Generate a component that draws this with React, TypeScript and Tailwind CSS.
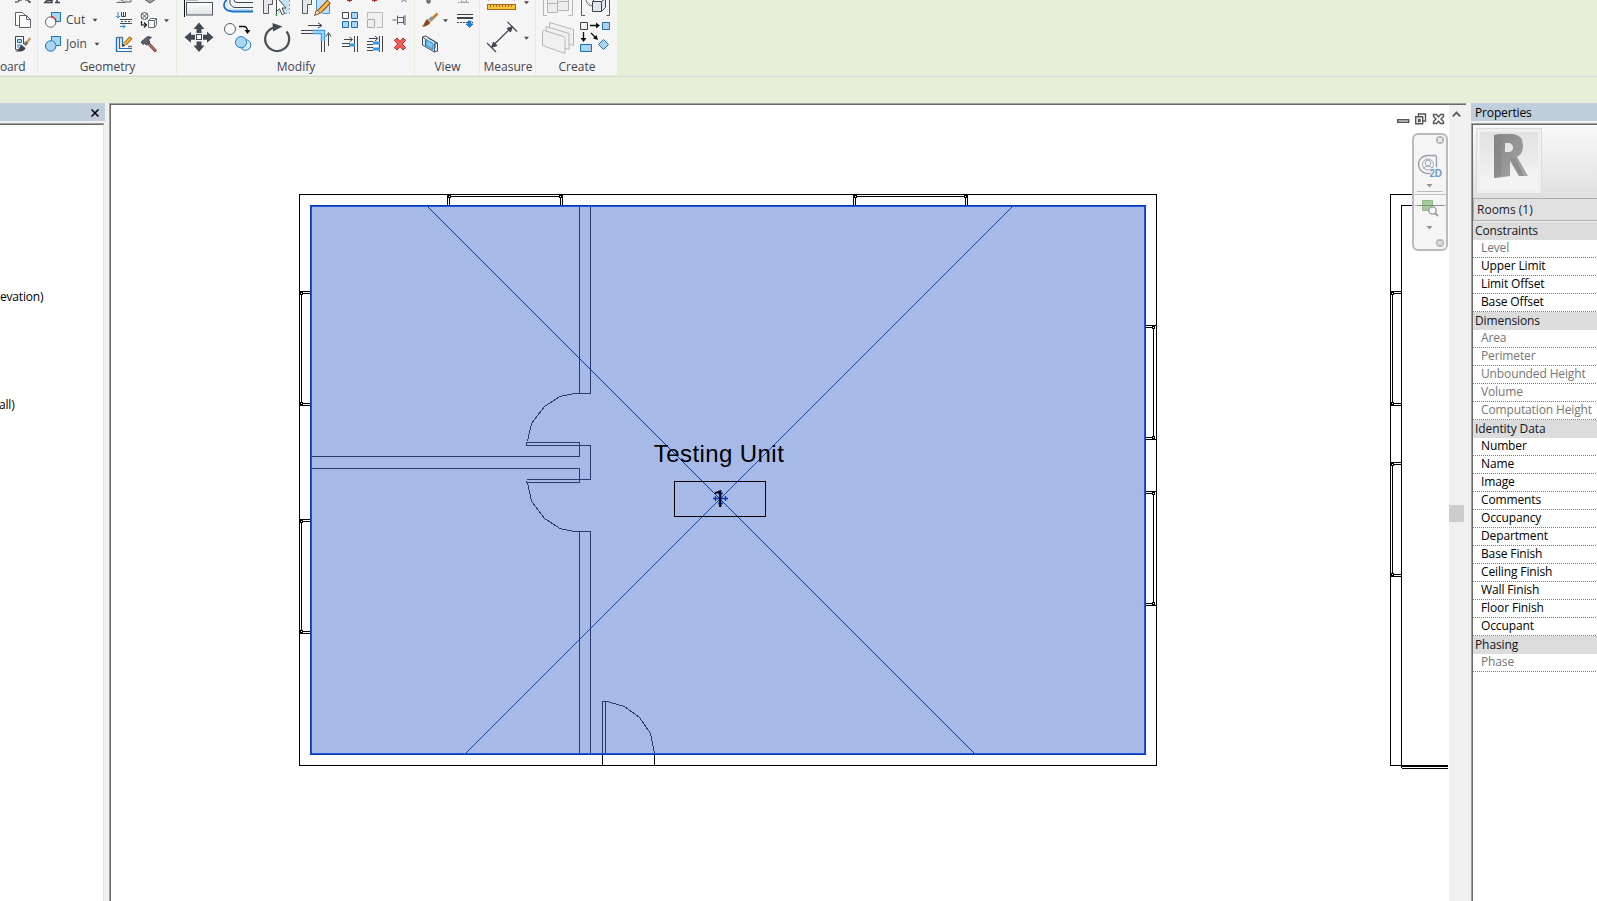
import React from "react";

const INK = "#3f4650";
const BLUE = "#1a6fb5";
const SKY = "#a8d6ee";

function Caret({ x, y }: { x: number; y: number }) {
  return <path d={`M${x - 2.5} ${y - 1.2}h5l-2.5 3z`} fill="#4a4a4a" />;
}

/* A strip of ribbon drawings; coordinates share the ribbon's own origin. */
function Strip({ x, w, children }: { x: number; w: number; children: React.ReactNode }) {
  return (
    <svg width={w} height={57} viewBox={`${x} 0 ${w} 57`} className="block shrink-0" fill="none">
      {children}
    </svg>
  );
}

function Group({ label, className, children }: { label: string; className: string; children: React.ReactNode }) {
  return (
    <div className={"flex h-[75px] shrink-0 flex-col overflow-hidden bg-[#f5f5f5] " + className}>
      <div className="flex h-[57px]">{children}</div>
      <div className="h-[18px] pl-px text-center text-[12px] leading-[19px] text-[#43434f]">{label}</div>
    </div>
  );
}

function ClipboardIcons() {
  return (
    <Strip x={0} w={37}>
      <g stroke={INK} strokeWidth="1.3">
        <path d="M18 2.500c0-2 2-3 4-2.500M29 2.500c0-2-2-3-4-2.500M16 3v-2M30 3v-2" />
      </g>
      <path d="M18.500 25.500h-3v-13h7l3 3" fill="#fff" stroke="#596068" />
      <path d="M19.500 15.500h7l4 4v8h-11z" fill="#fafafa" stroke="#596068" />
      <path d="M26.500 15.500v4h4" stroke="#596068" />
      <path d="M23.500 44v-7.500h-8v13h2" stroke={INK} fill="#fff" />
      <path d="M17.500 39.500h4v3h-4z" fill={SKY} stroke={BLUE} />
      <path d="M17 45h4M17 47h2" stroke={BLUE} />
      <path d="M30.500 38l-5 6" stroke="#c99c63" strokeWidth="2.400" />
      <path d="M27 42l-2.500 3" stroke="#777" strokeWidth="3.500" />
      <path d="M21 44.500l4.500 3.500c-1 3-4 4-10.500 3.500c3-1 4-3 6-7z" fill={INK} />
    </Strip>
  );
}

function CutJoinIcons() {
  return (
    <Strip x={38} w={27}>
      <path d="M45 2.500h7v-2h-5zM55 2.500h5M57 0v3" stroke={INK} strokeWidth="1.500" />
      <path d="M51.500 12.500h9v9h-9z" fill={SKY} stroke={BLUE} />
      <circle cx="50.700" cy="22" r="5.200" fill="#fff" stroke="#666" />
      <path d="M51 16.800a5.200 5.200 0 0 1 4.900 5" stroke="#e02020" strokeWidth="1.400" />
      <path d="M51.500 36.500h9v9h-9z" fill={SKY} stroke={BLUE} />
      <circle cx="50.700" cy="46" r="5.200" fill={SKY} stroke={BLUE} />
      <path d="M52 41v4.500h3.500" stroke={SKY} strokeWidth="1.500" />
    </Strip>
  );
}

function GeometryTools() {
  return (
    <Strip x={110} w={66}>
      <path d="M116.500 2.500h9l-5-3M125 -1h6v3h-6" stroke="#6b7076" fill="#dcdfe2" />
      <path d="M144 -1l6 4l6-4" stroke="#555" fill="#9aa0a8" />
      <path d="M118 12v6M116 16l2 2 2-2" stroke="#1f86dc" />
      <path d="M121.500 12v4.500h4V12M123.500 12v4" stroke={INK} />
      <path d="M120 19.500h12M120 23.500h12" stroke={INK} />
      <path d="M121 21.500h11" stroke={INK} strokeDasharray="2 1.500" />
      <path d="M120 26.500h5M123 24.500l2 2-2 2" stroke="#1f86dc" />
      <circle cx="144.500" cy="16" r="3.500" stroke="#555b63" />
      <path d="M142 13.500l5 5M147 13.500l-5 5" stroke="#555b63" />
      <path d="M141.500 21v4h4M144 22.500l2.500 2.500-2.500 2.500" stroke="#111" strokeWidth="1.200" />
      <path d="M148.500 20.500l2-2h6v6l-2 3h-6z" fill="#f7f7f7" stroke="#666d75" />
      <path d="M148.500 20.500h6v7M154.500 20.500l2-2" stroke="#666d75" />
      <Caret x={166.500} y={20.500} />
      <path d="M116.500 37v15M119.500 37v12M122.500 37v9" stroke="#1f6fb8" strokeWidth="1.300" />
      <path d="M116 51.500h16M119 48.500h13" stroke="#1f6fb8" strokeWidth="1.200" />
      <path d="M117 37.500h6M128 46.500h4M129 51.500h3" stroke="#777" strokeWidth="1.500" />
      <path d="M131 37.500l-6 6.500" stroke="#8a4a12" strokeWidth="3.800" />
      <path d="M130.500 38l-6 6.500" stroke="#f5b431" strokeWidth="2.400" />
      <path d="M122 47l1-3.500 2.500 2.200z" fill="#4a3b2d" />
      <path d="M148 43l8 8.500" stroke="#7e3e36" strokeWidth="3" />
      <path d="M148 43l8 8.500" stroke="#d79a8b" strokeWidth="1" />
      <path d="M141 42l6.500-5.500 4 .8-3 2.700 1.500 2-3.500 3-2-1.500-1.500 1z" fill="#59616c" stroke="#343b45" strokeWidth=".8" />
    </Strip>
  );
}

function ModifyIcons() {
  return (
    <Strip x={177} w={237}>
      <defs>
        <linearGradient id="plate" x1="0" y1="0" x2="0" y2="1">
          <stop offset="0" stopColor="#fff" />
          <stop offset="1" stopColor="#dfe1e5" />
        </linearGradient>
      </defs>
      <path d="M184.500 0v17" stroke="#111" />
      <path d="M186 0h12" stroke="#bbb" strokeWidth="2" />
      <rect x="186.500" y="2.500" width="26" height="12.500" fill="url(#plate)" stroke="#50565e" />
      <path d="M253 2.500h-16q-3 0-3-2.500M253 7.500h-18q-6-1-5-7.500" stroke={INK} />
      <path d="M253 11.500h-20q-9-.5-9-6.500q0-3 3-5.500" stroke="#1673c7" strokeWidth="1.800" />
      <path d="M227 1q-1 8 6 8.500h20" stroke="#bcdcf2" />
      <path d="M263.500 0v13.500h5v-9h4V0" fill="#e4e6e9" stroke="#555b63" />
      <path d="M279 0h10v13h-11z" fill="#c4e2f4" />
      <path d="M276.500 0v14" stroke="#3f4650" />
      <path d="M289.500 0v13.500h-9" stroke="#6da9d8" strokeDasharray="2 2" />
      <path d="M276.500 -3v14.500l3-2.800 2.500 6 2.500-1.200-2.500-5.500h4z" fill="#fff" stroke="#4a4a4a" />
      <circle cx="276.500" cy="15" r="1" fill="#2da12d" />
      <path d="M302.500 0v13.500h5v-9h4V0" fill="#e4e6e9" stroke="#555b63" />
      <path d="M316 0h13v13h-13z" fill="#bfe0f4" />
      <path d="M316.500 0v12M329.500 5v8.500h-7" stroke="#3d97dc" />
      <path d="M329 1.500l-9.500 10" stroke="#8a4812" strokeWidth="5" />
      <path d="M328.500 2l-9.500 10" stroke="#f8bd48" strokeWidth="3" />
      <path d="M314.500 15.500l2-6 4 3.700z" fill="#f3d8ae" stroke="#564331" strokeWidth=".8" />
      <path d="M347 .5h5M349.500 0v2M372 .5h5M374.500 0v2" stroke="#b72a2a" strokeWidth="1.200" />
      <path d="M401.500 2l2.500-2.500 2.500 2.500" stroke="#aaa" strokeWidth="1.500" />

      <g fill="#424951">
        <path d="M199 22.500l5.500 6.500h-3v4h-5v-4h-3z" />
        <path d="M199 52l5.500-6.500h-3v-4h-5v4h-3z" />
        <path d="M184.500 37.200l6.500-5.500v3h4v5h-4v3z" />
        <path d="M213.500 37.200l-6.500-5.500v3h-4v5h4v3z" />
      </g>
      <rect x="196.500" y="34.500" width="5" height="5" fill="#fff" stroke="#424951" />
      <circle cx="230" cy="29" r="5.500" fill="#fafafa" stroke="#596068" />
      <path d="M239 26.500h4.500q4 0 4 5" stroke="#111" strokeWidth="1.300" />
      <path d="M244.500 30l3 4 3-4z" fill="#111" />
      <circle cx="245.500" cy="45" r="5.300" fill="#d5ebf7" stroke="#2680c7" />
      <circle cx="241" cy="42.200" r="5.600" fill={SKY} stroke="#2680c7" />
      <path d="M286.500 31.500a12 12 0 1 1-14.500-3.300l3-1" stroke="#4b5158" strokeWidth="2.200" />
      <path d="M272.500 23l10 3.500-9.500 5z" fill="#424951" />
      <path d="M308 25.500h13M318 23l4 2.500-4 2.500M328.500 46V34M326 36.500l2.500-4 2.500 4" stroke={INK} />
      <path d="M301 30.500h12M301 33.500h12M321.500 41v11M324.500 41v11" stroke={INK} />
      <path d="M313 32h10v9" stroke="#3c9fec" strokeWidth="4.500" />
      <path d="M313 32h10v9" stroke="#9dd1fb" strokeWidth="2" />

      <path d="M342.500 12.500h6v6h-6z" fill="#fff" stroke={INK} />
      <path d="M351.500 12.500h6v6h-6zM342.500 21.500h6v6h-6zM351.500 21.500h6v6h-6z" fill={SKY} stroke={BLUE} />
      <path d="M367.500 18v-5.500h15v15h-6" fill="#f0f0f0" stroke="#b9b9b9" />
      <path d="M367.500 19.500h7v8h-7z" fill="#eee" stroke="#aaa" />
      <path d="M392.500 20h4M397.500 15.500v9M398 17.500h5M398 22.500h5M403.500 17l1.500-1.500v9.500l-1.500-1.500z" stroke="#5c6269" />
      <path d="M344 39.500h8M349.500 37l3 2.500-3 2.500M342 43.500h8M342 46.500h8M354.500 36v16M357.500 36v16" stroke={INK} />
      <path d="M349 45h6" stroke="#3399f0" strokeWidth="3" />
      <path d="M369 38.500h8M375 36l3 2.500-3 2.500M367 41.500h6M367 44.500h6M367 47.500h6M367 50.500h6M379.500 36v16M382.500 36v16" stroke={INK} />
      <path d="M373 43h7M373 49h7" stroke="#3399f0" strokeWidth="3" />
      <path d="M394.500 40.500l2.500-2.500 3 3.500 3-3.500 2.500 2.500-3.300 3.500 3.300 3.500-2.500 2.500-3-3.500-3 3.500-2.500-2.500 3.300-3.500z" fill="#f4605c" stroke="#c51d1d" />
    </Strip>
  );
}

function ViewIcons() {
  return (
    <Strip x={415} w={64}>
      <path d="M427 0v2.500q1.500 1.500 3 0V0" fill="#888e98" stroke={INK} />
      <path d="M458 2.500h11M461.500 0v2h5V0" stroke="#aaa" />
      <path d="M437.500 13.500l-7 7" stroke="#c77a38" strokeWidth="2.600" />
      <path d="M432.500 17.500l-3 3" stroke="#8d939b" strokeWidth="3.400" />
      <path d="M427 19l3.500 3.500c-2 3-5 4-8.500 4.300c2-2 2.500-5 5-7.800z" fill="#8a4b1f" />
      <Caret x={445.500} y={20.500} />
      <path d="M457 14.500h16" stroke={INK} />
      <path d="M457 18h16" stroke={INK} strokeWidth="2" />
      <path d="M457 22.500h16" stroke={INK} strokeDasharray="2 1" />
      <path d="M468 21h3v3h2l-3.500 3.500-3.500-3.500h2z" fill="#1e82dc" stroke="#0f5ca8" strokeWidth=".6" />
      <path d="M422.500 37l3-1 12 7v8l-3 1-12-7z" fill="#edf1f5" stroke={INK} />
      <path d="M426 39.500l7 4v6l-7-4z" fill="#7cc4f4" stroke="#1b86da" />
      <path d="M428 38l7 4v6M422.500 37l3 2v7M434.500 52v-8l3-1" stroke="#47617c" />
    </Strip>
  );
}

function MeasureIcons() {
  return (
    <Strip x={480} w={55}>
      <path d="M489 0v1M514 0v1" stroke="#999" />
      <rect x="487.500" y="4.500" width="28" height="5" fill="#f7c33c" stroke="#a8681c" />
      <path d="M490.500 5v2M493.500 5v2M496.500 5v2M499.500 5v2M502.500 5v2M505.500 5v2M508.500 5v2M511.500 5v2" stroke="#a8681c" />
      <Caret x={526.500} y={2.500} />
      <path d="M492 46.500l20-19.500M507.500 22l9.500 9.500M487 43l9 9" stroke={INK} strokeWidth="1.200" />
      <path d="M491.500 47.500l2-5.500 3.500 3.500zM512.500 26.500l-5.500 2 3.500 3.500z" fill={INK} stroke={INK} />
      <Caret x={526.500} y={38} />
    </Strip>
  );
}

function CreateIcons() {
  return (
    <Strip x={536} w={81}>
      <path d="M547 15.500h-3.500V0M568.500 15.500h4V0" stroke="#b5b5b5" />
      <path d="M547.500 0v12.500h9l3-2h9V0M557.500 0v12M547.500 3.500h9l3-2h9" fill="#ededed" stroke="#b5b5b5" />
      <path d="M585 15.500h-3.500V0M606.500 15.500h3V0" stroke="#555b63" />
      <path d="M586 0q1 6 7 6" fill="#d8dbdf" stroke="#70767e" />
      <path d="M592.500 1.500h9v10h-9zM592.500 1.500l3-3M601.500 1.500l4-3v9l-4 4" fill="#e2e6ea" stroke={INK} />
      <g fill="#f0f0f0" stroke="#b7b7b7">
        <path d="M549.500 22.500l24 7v16l-24-7z" />
        <path d="M546 26.500l23 7v16l-23-7z" />
        <path d="M542.500 31.500q0-1.500 2-1l19 6q1.500.5 1.500 2v15l-22.500-8z" />
      </g>
      <path d="M580.500 22.500h7v7h-7z" fill="#f1f1f1" stroke={INK} />
      <path d="M602.500 22.500h7v7h-7z" fill={SKY} stroke={BLUE} />
      <path d="M580.500 44.500h11v7h-11z" fill={SKY} stroke={BLUE} />
      <path d="M603.500 39.500l5 5-5 5-5-5z" fill={SKY} stroke={BLUE} />
      <path d="M590 25.500h7M583.500 32v7M591 33l4.500 4.500" stroke="#111" strokeWidth="1.300" />
      <path d="M596 22.500l4 3-4 3zM580.500 38l3 4 3-4zM598 40l-5-1.500 3.500-3.500z" fill="#111" />
    </Strip>
  );
}

function CommandRow({ label, className }: { label: string; className: string }) {
  return (
    <div className={"flex h-6 items-center text-[12px] text-[#43434f] " + className}>
      <span>{label}</span>
      <svg width="6" height="5" viewBox="0 0 6 5">
        <Caret x={3} y={2} />
      </svg>
    </div>
  );
}

function Ribbon() {
  return (
    <header className="h-[103px] shrink-0 overflow-hidden bg-[#e6efd8]">
      <div className="flex h-[77px] gap-px border-b border-[#d3d7d8] pb-px">
        <div className="flex h-[75px] w-[37px] shrink-0 flex-col overflow-hidden bg-[#f5f5f5]">
          <ClipboardIcons />
          <div className="text-[12px] leading-[19px] tracking-[-0.2px] text-[#43434f]">oard</div>
        </div>
        <Group label="Geometry" className="w-[138px]">
          <CutJoinIcons />
          <div className="flex w-[45px] flex-col pt-2 pl-px">
            <CommandRow label="Cut" className="gap-[7px]" />
            <CommandRow label="Join" className="gap-[7px]" />
          </div>
          <GeometryTools />
        </Group>
        <Group label="Modify" className="w-[237px]">
          <ModifyIcons />
        </Group>
        <Group label="View" className="w-[64px]">
          <ViewIcons />
        </Group>
        <Group label="Measure" className="w-[55px]">
          <MeasureIcons />
        </Group>
        <Group label="Create" className="w-[81px]">
          <CreateIcons />
        </Group>
      </div>
    </header>
  );
}

function Browser() {
  return (
    <aside className="flex w-[105px] shrink-0 flex-col">
      <div className="flex h-[18px] items-center justify-end bg-[#c0cddb] pt-px pr-1.5">
        <svg width="8" height="8" viewBox="0 0 8 8">
          <path d="M.5.5l7 7M7.500.5l-7 7" stroke="#000" strokeWidth="1.500" />
        </svg>
      </div>
      <div className="mt-0.5 mr-px flex-1 border-t border-[#a0a0a0]">
        <div className="h-full border-t border-r border-t-[#696969] border-r-[#e3e3e3] bg-white pt-[162px] text-[12px] leading-[19px] tracking-[-0.2px] text-black">
          <div className="h-[18px]">evation)</div>
          <div className="mt-[90px] -ml-px h-[18px]">all)</div>
        </div>
      </div>
    </aside>
  );
}

function SideWindow({ x, glass, inner, y1, y2 }: { x: number; glass: number; inner: number; y1: number; y2: number }) {
  const c = glass - 1;
  return (
    <g>
      <path d={`M${x + 0.5} ${y1 + 0.5}H${inner}M${glass + 0.5} ${y1 + 2.5}H${inner}M${x + 0.5} ${y2 + 0.5}H${inner}M${glass + 0.5} ${y2 - 1.5}H${inner}M${glass + 0.5} ${y1}V${y2}`} />
      <path d={`M${c + 0.5} ${y1 + 1.5}h2v2h-2zM${c + 0.5} ${y2 - 2.5}h2v2h-2z`} fill="#fff" />
    </g>
  );
}

function TopWindow({ x1, x2 }: { x1: number; x2: number }) {
  return (
    <g>
      <path d={`M${x1 + 0.5} 194v11M${x1 + 2.5} 196v9M${x2 + 0.5} 194v11M${x2 - 1.5} 196v9M${x1} 196.500H${x2}`} />
      <path d={`M${x1 + 1.5} 195.500h2v2h-2zM${x2 - 2.5} 195.500h2v2h-2z`} fill="#fff" />
    </g>
  );
}

function FloorPlan() {
  return (
    <svg width={1338} height={796} viewBox="111 105 1338 796" className="block" fill="none">
      <g stroke="#000" shapeRendering="crispEdges">
        <path d="M299.500 194.500h857v571h-857z" />
        <TopWindow x1={447} x2={562} />
        <TopWindow x1={853} x2={967} />
        <SideWindow x={299} glass={301} inner={310} y1={291} y2={405} />
        <SideWindow x={299} glass={301} inner={310} y1={519} y2={633} />
        <SideWindow x={1156} glass={1153} inner={1146} y1={325} y2={439} />
        <SideWindow x={1156} glass={1153} inner={1146} y1={491} y2={605} />
        <path d="M602.500 755v10M654.500 755v10" />
        <path d="M1448 194.500h-57.500v571h11M1448 205.500h-46.500v562M1401 766H1448M1402 768.500H1448" />
        <path d="M1401 765.500H1448" />
        <SideWindow x={1390} glass={1392} inner={1401} y1={291} y2={405} />
        <SideWindow x={1390} glass={1392} inner={1401} y1={462} y2={576} />
      </g>
      <rect x="310" y="205" width="836" height="550" fill="#a6b9e7" shapeRendering="crispEdges" />
      <g stroke="#283a70" shapeRendering="crispEdges">
        <path d="M579.500 207V393.500M590.500 207V393.500H574" />
        <path d="M574 393.500L560 396.500L544.500 406.500L531.500 423.500L527.500 441" />
        <path d="M312 456.500H579.500V442.500H526.500v3H590.500V479.500H527" />
        <path d="M312 468.500H579.500V482.500H526.500v-2" />
        <path d="M527.500 483L531.500 501L544.500 518.500L560 528.500L574 531.500H590.500V753M579.500 531V753" />
        <path d="M602.500 753V701.500H607L624.500 706.500L639.500 717.500L650.500 733.500L654.500 753M605.500 702V753" />
      </g>
      <g stroke="#0038bd">
        <path d="M427.200 206L974.700 753.500" shapeRendering="crispEdges" />
        <path d="M1012.800 206.100L465.900 753.400" shapeRendering="crispEdges" strokeWidth=".9" />
      </g>
      <path d="M310.500 205.500h835v549h-835z" stroke="#063cb8" shapeRendering="crispEdges" />
      <path d="M311.500 206.500h833v547h-833z" stroke="#1e56ce" shapeRendering="crispEdges" />
      <text x="653.800" y="462" fontSize="24" textLength="130" className="font-['Liberation_Sans',Arial,sans-serif]" fill="#000">Testing Unit</text>
      <path d="M674.500 481.500h91v35h-91z" stroke="#000" shapeRendering="crispEdges" />
      <path d="M713 498.500h15M720.500 491v15M715.500 496v5M725.500 496v5M718 493.500h5M718 503.500h5" stroke="#0038bd" strokeWidth="1.300" />
      <text x="719.500" y="506.500" fontSize="23" textAnchor="middle" className="font-[Roboto,Arial,sans-serif]" fill="#000">1</text>
      <g stroke="#555" strokeWidth="1.400">
        <path d="M1397.700 119.700h11v2.600h-11z" />
        <path d="M1415.700 116.700h7v7h-7zM1418.500 116.500v-2.500h7v7h-2.500M1418.500 119.500h1.500v2h-1.500z" />
        <path d="M1433.500 114.500h3l2 2.500 2-2.500h3v2l-2.500 2.500 2.500 2.500v2h-3l-2-2.500-2 2.500h-3v-2l2.500-2.500-2.500-2.500z" />
      </g>
    </svg>
  );
}

function NavigationBar() {
  return (
    <div className="absolute top-[28px] left-[1301px] h-[118px] w-[36px] rounded-[6px] border-2 border-[#bbbbbb] bg-[#f2f2f2]/80">
      <svg width="32" height="114" viewBox="1414 135 32 114" className="block" fill="none">
        <circle cx="1440" cy="140" r="4" fill="#b4b4b4" />
        <path d="M1438 138l4 4M1442 138l-4 4" stroke="#fff" strokeWidth="1.200" />
        <path d="M1428 155.500h6.500q2 0 2 2v10M1428 155.500a9 9 0 1 0 2.500 17.500" stroke="#9a9fa5" strokeWidth="1.300" />
        <circle cx="1428" cy="164.500" r="5.500" fill="#f5f5f5" stroke="#a0a5ab" />
        <circle cx="1428" cy="163" r="2.800" stroke="#a0a5ab" />
        <path d="M1423.500 168.500q1-2.500 4.500-2.500t4.500 2.500" stroke="#a0a5ab" />
        <text x="1429.500" y="176.500" fontSize="10" fontWeight="bold" textLength="12.500" fill="#6d9bc8" stroke="#f5f5f5" strokeWidth="1.500" paintOrder="stroke" className="font-['Liberation_Sans',Arial,sans-serif]">2D</text>
        <path d="M1426.500 184h6l-3 3.500zM1426.500 226h6l-3 3.500z" fill="#949494" />
        <path d="M1417 191.500h26" stroke="#bbb" />
        <path d="M1422.500 200.500h10v10h-10z" fill="#a5cc9c" stroke="#8eb985" />
        <path d="M1417 205.500h27" stroke="#777" strokeWidth=".7" />
        <circle cx="1432.500" cy="210.500" r="3.700" fill="#f5f5f5" stroke="#999" strokeWidth="1.300" />
        <path d="M1435 213l3 3" stroke="#999" strokeWidth="1.800" />
        <circle cx="1440" cy="243" r="4" fill="#b4b4b4" />
        <path d="M1437.500 242h5M1437.500 244h5" stroke="#fff" />
      </svg>
    </div>
  );
}

const SECTIONS: { title: string; rows: string[]; muted?: string[] }[] = [
  { title: "Constraints", rows: ["Level", "Upper Limit", "Limit Offset", "Base Offset"], muted: ["Level"] },
  {
    title: "Dimensions",
    rows: ["Area", "Perimeter", "Unbounded Height", "Volume", "Computation Height"],
    muted: ["Area", "Perimeter", "Unbounded Height", "Volume", "Computation Height"],
  },
  {
    title: "Identity Data",
    rows: ["Number", "Name", "Image", "Comments", "Occupancy", "Department", "Base Finish", "Ceiling Finish", "Wall Finish", "Floor Finish", "Occupant"],
  },
  { title: "Phasing", rows: ["Phase"], muted: ["Phase"] },
];

function PropertyRow({ name, muted }: { name: string; muted: boolean }) {
  return (
    <div className="flex h-[18px] flex-col justify-between overflow-hidden pl-2">
      <div className={"h-[17px] text-[12px] leading-[16px] tracking-[-0.13px] whitespace-nowrap " + (muted ? "text-[#767676]" : "text-black")}>{name}</div>
      <div className="-ml-2 h-px shrink-0 bg-[repeating-linear-gradient(90deg,#7a7a7a_0_1px,#ffffff_1px_2px)]" />
    </div>
  );
}

function TypePreview() {
  return (
    <svg width="66" height="66" viewBox="0 0 66 66" className="block" fill="none">
      <defs>
        <linearGradient id="tile" x1="0" y1="0" x2="0" y2="1">
          <stop offset="0" stopColor="#e2e2e2" />
          <stop offset="1" stopColor="#f5f5f5" />
        </linearGradient>
        <linearGradient id="letter" x1="0" y1="0" x2="1" y2="1">
          <stop offset="0" stopColor="#858585" />
          <stop offset="1" stopColor="#a8a8a8" />
        </linearGradient>
      </defs>
      <rect x=".5" y=".5" width="65" height="65" fill="#f0f0f0" stroke="#dcdcdc" />
      <path d="M4 4h58v58H4z" fill="url(#tile)" />
      <path d="M4 48L62 40V62H4z" fill="#f3f3f3" />
      <path fillRule="evenodd" d="M18 7l5-1h14q10 1 10 12q0 8-6 11l11 19H43l-9-15v15l-14 2h-2zM29 15v9h4q4-.5 4-4.500t-4-4.500z" fill="url(#letter)" />
      <path d="M18 7l7 5v35l-7 3zM34 30h5l9 18h-5z" fill="#818181" opacity=".55" />
    </svg>
  );
}

function Properties() {
  return (
    <aside className="flex w-[126px] shrink-0 flex-col overflow-hidden">
      <div className="h-[18px] bg-[#c0cddb] pl-1 text-[12px] leading-[20px] tracking-[-0.15px] text-black">Properties</div>
      <div className="mt-0.5 flex-1 border-t border-l border-[#a0a0a0]">
        <div className="flex h-full flex-col border-t border-l border-[#696969] bg-white">
          <div className="h-[73px] bg-linear-to-b from-[#f9f9f9] to-[#e0e0e0] pt-[3px] pl-[3px]">
            <TypePreview />
          </div>
          <div className="h-[23px] border-y border-l border-[#acacac] bg-[#e1e1e1] pl-[3px] text-[12px] leading-[22px] text-[#202028]">
            Rooms (1)
          </div>
          <div className="h-px bg-[#f0f0f0]" />
          {SECTIONS.map((s) => (
            <section key={s.title}>
              <h2 className="h-[18px] bg-[#dcdcdc] pl-0.5 text-[12px] leading-[18px] tracking-[-0.1px] text-[#14141c]">{s.title}</h2>
              {s.rows.map((r) => (
                <PropertyRow key={r} name={r} muted={!!s.muted?.includes(r)} />
              ))}
            </section>
          ))}
        </div>
      </div>
    </aside>
  );
}

export default function App() {
  return (
    <div className="flex h-[901px] w-[1597px] flex-col overflow-hidden bg-[#f0f0f0] font-['Open_Sans','Noto_Sans',sans-serif]">
      <Ribbon />
      <div className="flex min-h-0 flex-1">
        <Browser />
        <main className="ml-1 flex w-[1357px] shrink-0 border-t border-l border-[#a0a0a0]">
          <div className="flex w-full border-t border-l border-[#696969] bg-[#f0f0f0]">
            <div className="relative w-[1338px] shrink-0 bg-white">
              <FloorPlan />
              <NavigationBar />
            </div>
            <div className="flex w-[17px] flex-col items-start border-r border-[#f5f5f5]">
              <svg width="15" height="400" viewBox="0 0 15 400" className="block" fill="none">
                <path d="M3.800 11.500l3.700-4 3.700 4" stroke="#505050" strokeWidth="1.800" />
              </svg>
              <div className="h-[17px] w-[15px] bg-[#cdcdcd]" />
            </div>
          </div>
        </main>
        <div className="w-[5px] shrink-0 bg-[#f0f0f0]" />
        <Properties />
      </div>
    </div>
  );
}
